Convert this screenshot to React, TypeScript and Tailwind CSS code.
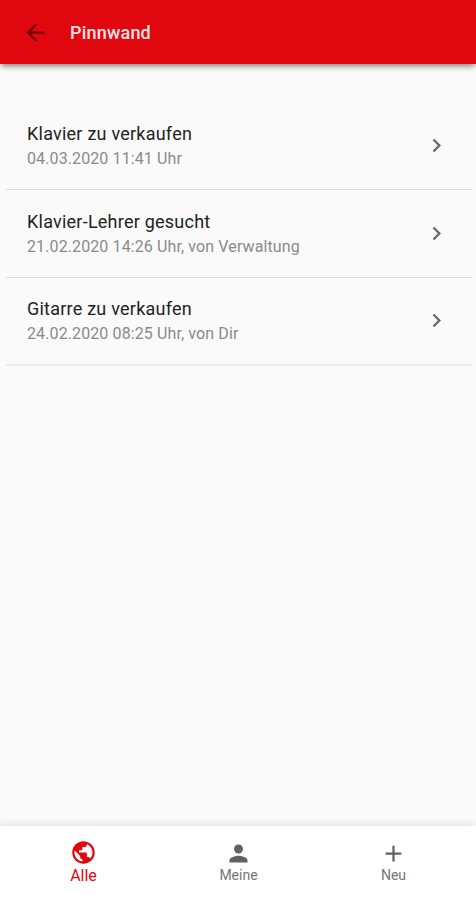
import { MdAdd, MdArrowBack, MdChevronRight, MdPerson, MdPublic } from "react-icons/md";

const posts = [
  { title: "Klavier zu verkaufen", meta: "04.03.2020 11:41 Uhr" },
  { title: "Klavier-Lehrer gesucht", meta: "21.02.2020 14:26 Uhr, von Verwaltung" },
  { title: "Gitarre zu verkaufen", meta: "24.02.2020 08:25 Uhr, von Dir" },
];

const tabs = [
  { label: "Alle", icon: MdPublic, active: true },
  { label: "Meine", icon: MdPerson, active: false },
  { label: "Neu", icon: MdAdd, active: false },
];

export default function App() {
  return (
    <div className="flex h-[900px] w-[476px] flex-col overflow-hidden bg-[#fafafa] font-['Roboto',sans-serif]">
      <header className="z-10 flex h-16 shrink-0 items-center bg-[#e1070f] pl-[22px] shadow-[0_3px_6px_-1px_rgba(0,0,0,0.5)]">
        <button type="button" aria-label="Zurück">
          <MdArrowBack className="h-[27px] w-[27px] text-[#6e0307]" />
        </button>
        <h1 className="ml-[21px] text-[18px] font-medium tracking-[0.2px] text-[#fde3e4]">Pinnwand</h1>
      </header>
      <main className="flex-1 pt-[38px] pr-1 pl-1.5">
        <ul>
          {posts.map((post) => (
            <li
              key={post.title}
              className="flex h-[88px] items-center justify-between border-b border-[#dadada] pr-[22px] pl-[21px] last:border-b-2 last:border-[#ececec] last:pb-px"
            >
              <div className="pt-px">
                <p className="text-[18px] leading-[25px] tracking-[0.23px] text-[#222222]">{post.title}</p>
                <p className="text-[16px] leading-[25px] tracking-[0.11px] text-[#8a8a8a]">{post.meta}</p>
              </div>
              <MdChevronRight className="h-[27px] w-[27px] text-[#686868]" />
            </li>
          ))}
        </ul>
      </main>
      <nav className="flex h-[74px] shrink-0 bg-white pr-[5px] pl-1.5 shadow-[0_-2px_8px_rgba(0,0,0,0.1)]">
        {tabs.map(({ label, icon: Icon, active }) => (
          <button
            key={label}
            type="button"
            className={
              active
                ? "flex flex-1 flex-col items-center pt-[13px] text-[16px] leading-[19px] text-[#e1070f]"
                : "flex flex-1 flex-col items-center pt-[14px] text-[14px] leading-[17px] text-[#757575]"
            }
          >
            <Icon className={active ? "h-[27px] w-[27px]" : "h-[27px] w-[27px] text-[#616161]"} />
            <span>{label}</span>
          </button>
        ))}
      </nav>
    </div>
  );
}
